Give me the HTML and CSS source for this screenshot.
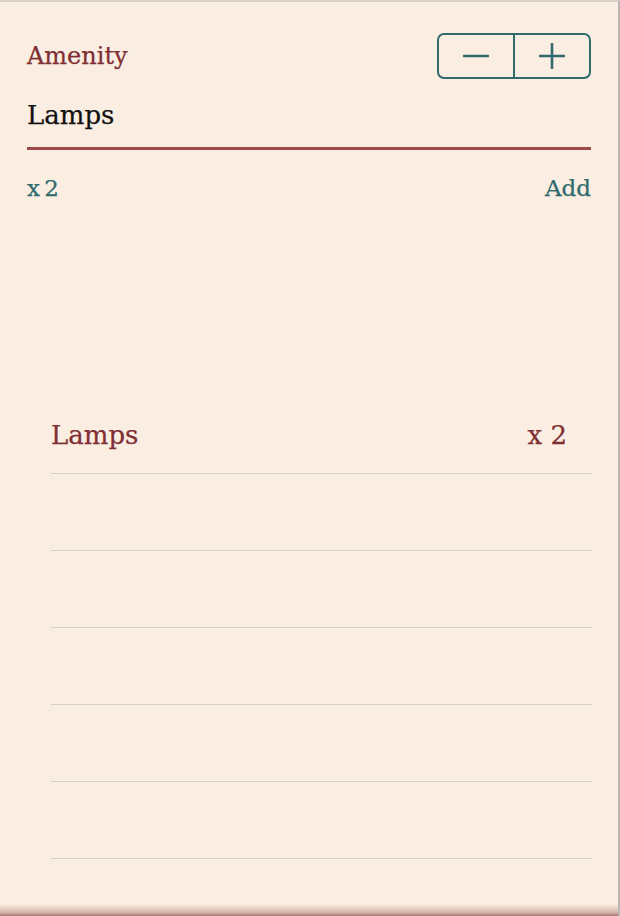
FILE: index.html
```html
<!DOCTYPE html>
<html>
<head>
<meta charset="utf-8">
<link rel="stylesheet" href="styles.css">
</head>
<body>
<div class="panel">
  <div class="form">
    <div class="head">
      <span class="label">Amenity</span>
      <div class="stepper">
        <button class="step" aria-label="decrease">
          <svg width="28" height="28" viewBox="0 0 28 28"><path d="M1 14H27" stroke="#2f6b6d" stroke-width="2.6"/></svg>
        </button>
        <button class="step" aria-label="increase">
          <svg width="28" height="28" viewBox="0 0 28 28"><path d="M1 14H27M14 1V27" stroke="#2f6b6d" stroke-width="2.6"/></svg>
        </button>
      </div>
    </div>
    <div class="input">Lamps</div>
    <div class="meta">
      <span>x 2</span>
      <span>Add</span>
    </div>
  </div>
  <ul class="list">
    <li class="row"><span>Lamps</span><span>x 2</span></li>
    <li class="row"></li>
    <li class="row"></li>
    <li class="row"></li>
    <li class="row"></li>
    <li class="row"></li>
  </ul>
</div>
</body>
</html>
```

FILE: styles.css
```css
html, body {
  margin: 0;
  padding: 0;
  background: #faede1;
}
body {
  font-family: "DejaVu Serif", serif;
  -webkit-text-stroke: 0.25px currentColor;
}
.panel {
  box-sizing: border-box;
  height: 916px;
  width: 620px;
  border-top: 2px solid #d8d0c9;
  border-right: 2px solid #b9b6b3;
  background: linear-gradient(to bottom, rgba(150, 90, 80, 0) calc(100% - 12px), rgba(150, 90, 80, 0.35) calc(100% - 4px), rgba(140, 85, 75, 0.75) 100%), #faede1;
  overflow: hidden;
}
.form {
  padding: 31px 27px 0 27px;
}
.head {
  display: flex;
  justify-content: space-between;
  align-items: center;
}
.label {
  color: #7f2f33;
  font-size: 24px;
}
.stepper {
  display: flex;
  width: 154px;
  height: 46px;
  box-sizing: border-box;
  border: 2px solid #2f6b6d;
  border-radius: 7px;
  overflow: hidden;
}
.step {
  flex: 1;
  display: flex;
  align-items: center;
  justify-content: center;
  background: transparent;
  border: 0;
  padding: 0;
  margin: 0;
}
.step + .step {
  border-left: 2px solid #2f6b6d;
}
.input {
  margin-top: 18px;
  font-size: 26px;
  color: #111;
  line-height: 36px;
  padding-bottom: 14px;
  border-bottom: 3px solid #9b4a4b;
}
.meta {
  display: flex;
  justify-content: space-between;
  margin-top: 23px;
  color: #2f6b6d;
  font-size: 23px;
  line-height: 30px;
}
.meta span:first-child {
  word-spacing: -3px;
}
.list {
  list-style: none;
  margin: 194px 26px 0 51px;
  padding: 0;
}
.row {
  height: 76px;
  border-bottom: 1px solid #d6d0cb;
  display: flex;
  align-items: center;
  justify-content: space-between;
  padding-right: 25px;
  color: #7f2f33;
  font-size: 26px;
}
```
